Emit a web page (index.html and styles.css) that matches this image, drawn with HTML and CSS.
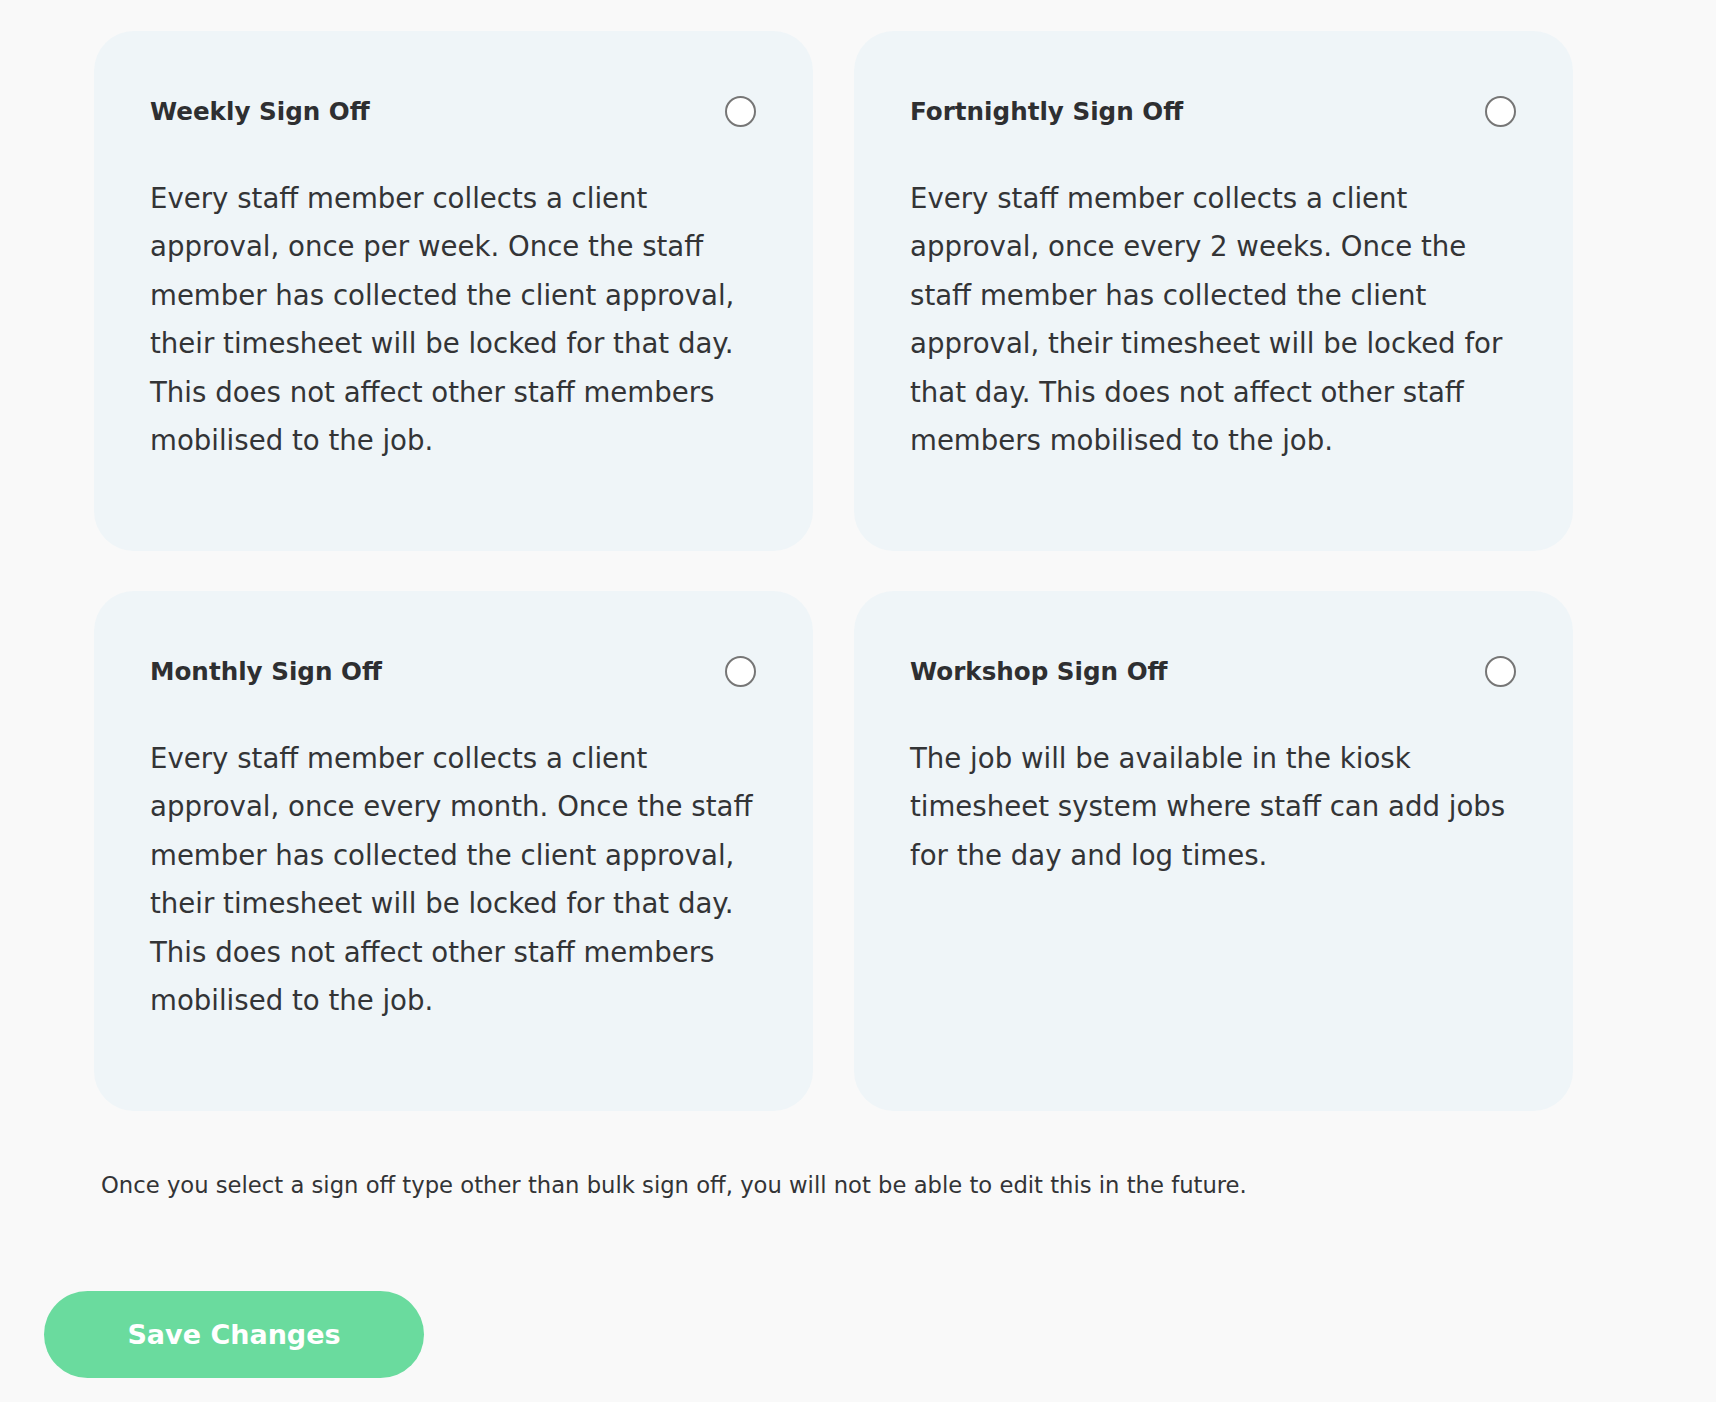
FILE: index.html
```html
<!DOCTYPE html>
<html lang="en">
<head>
<meta charset="utf-8">
<title>Sign Off Type</title>
<link rel="stylesheet" href="styles.css">
</head>
<body>
<main class="page">
  <section class="options">
    <label class="card">
      <div class="card-head">
        <span class="card-title">Weekly Sign Off</span>
        <span class="radio"></span>
      </div>
      <p class="card-text">Every staff member collects a client approval, once per week. Once the staff member has collected the client approval, their timesheet will be locked for that day. This does not affect other staff members mobilised to the job.</p>
    </label>
    <label class="card">
      <div class="card-head">
        <span class="card-title">Fortnightly Sign Off</span>
        <span class="radio"></span>
      </div>
      <p class="card-text">Every staff member collects a client approval, once every 2 weeks. Once the staff member has collected the client approval, their timesheet will be locked for that day. This does not affect other staff members mobilised to the job.</p>
    </label>
    <label class="card">
      <div class="card-head">
        <span class="card-title">Monthly Sign Off</span>
        <span class="radio"></span>
      </div>
      <p class="card-text">Every staff member collects a client approval, once every month. Once the staff member has collected the client approval, their timesheet will be locked for that day. This does not affect other staff members mobilised to the job.</p>
    </label>
    <label class="card">
      <div class="card-head">
        <span class="card-title">Workshop Sign Off</span>
        <span class="radio"></span>
      </div>
      <p class="card-text">The job will be available in the kiosk timesheet system where staff can add jobs for the day and log times.</p>
    </label>
  </section>
  <p class="note">Once you select a sign off type other than bulk sign off, you will not be able to edit this in the future.</p>
  <button class="save" type="button">Save Changes</button>
</main>
</body>
</html>
```

FILE: styles.css
```css
html, body {
  margin: 0;
  padding: 0;
  background: #f9f9f9;
}

body {
  font-family: "DejaVu Sans", "Open Sans", sans-serif;
  color: #333436;
}

.page {
  padding: 31px 0 25px 44px;
}

.options {
  display: grid;
  grid-template-columns: 719px 719px;
  column-gap: 41px;
  row-gap: 40px;
  margin-left: 50px;
}

.card {
  display: block;
  box-sizing: border-box;
  height: 520px;
  background: #eff5f8;
  border-radius: 40px;
  padding: 64px 56px 0 56px;
  cursor: pointer;
}

.card-head {
  display: flex;
  align-items: center;
  justify-content: space-between;
  height: 32px;
}

.card-title {
  font-size: 24.6px;
  font-weight: 700;
  color: #2e2f31;
}

.radio {
  box-sizing: border-box;
  width: 31px;
  height: 31px;
  border: 2px solid #767676;
  border-radius: 50%;
  background: #ffffff;
  margin-right: 1px;
}

.card-text {
  margin: 48px -6px 0 0;
  font-size: 27.6px;
  line-height: 48.4px;
  color: #333436;
}

.note {
  margin: 59px 0 0 57px;
  font-size: 22.7px;
  line-height: 30px;
  color: #333436;
}

.save {
  margin-top: 91px;
  width: 380px;
  height: 87px;
  border: none;
  border-radius: 44px;
  background: #6adb9e;
  color: #ffffff;
  font-family: "DejaVu Sans", "Open Sans", sans-serif;
  font-size: 27px;
  font-weight: 700;
  padding: 0;
  cursor: pointer;
}
```
